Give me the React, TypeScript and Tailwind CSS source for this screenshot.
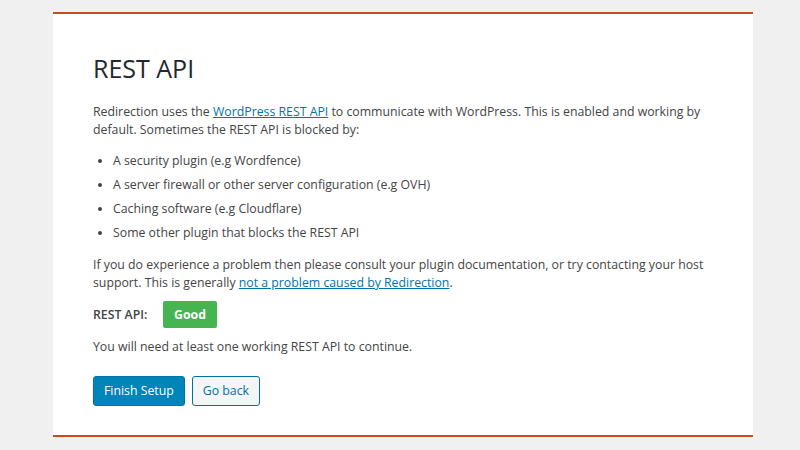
export default function App() {
  const items = [
    "A security plugin (e.g Wordfence)",
    "A server firewall or other server configuration (e.g OVH)",
    "Caching software (e.g Cloudflare)",
    "Some other plugin that blocks the REST API",
  ];

  return (
    <div className="min-h-[450px] bg-[#f0f0f0] pt-3 font-['Open_Sans',sans-serif] text-[12.3px] leading-[18px] text-[#444]">
      <div className="ml-[53px] w-[700px] border-y-2 border-[#ca4a1f] bg-white pb-[29px] pl-10 pr-9 pt-[37px]">
        <h1 className="text-[25px] leading-[34px] font-normal text-[#23282d]">REST API</h1>

        <p className="mt-[18px]">
          Redirection uses the{" "}
          <a href="#" className="text-[#0073aa] underline">WordPress REST API</a> to communicate with WordPress. This is
          enabled and working by default. Sometimes the REST API is blocked by:
        </p>

        <ul className="mt-[13px] list-disc pl-5 marker:text-[#444]">
          {items.map((item) => (
            <li key={item} className="mb-[6px]">{item}</li>
          ))}
        </ul>

        <p className="mt-[14px]">
          If you do experience a problem then please consult your plugin documentation, or try contacting your host
          support. This is generally{" "}
          <a href="#" className="text-[#0073aa] underline">not a problem caused by Redirection</a>.
        </p>

        <div className="mt-[9px] flex items-center">
          <span className="w-[70px] font-semibold">REST API:</span>
          <span className="rounded-[2px] bg-[#46b450] px-[11px] py-[4.5px] font-bold text-white">Good</span>
        </div>

        <p className="mt-[10px]">You will need at least one working REST API to continue.</p>

        <div className="mt-[20px] flex gap-[7px]">
          <button className="h-[30px] rounded-[3px] border border-[#0073aa] bg-[#0085ba] px-[10px] text-white">
            Finish Setup
          </button>
          <button className="h-[30px] rounded-[3px] border border-[#0071a1] bg-[#f3f5f6] px-[10px] text-[#0071a1]">
            Go back
          </button>
        </div>
      </div>
    </div>
  );
}
